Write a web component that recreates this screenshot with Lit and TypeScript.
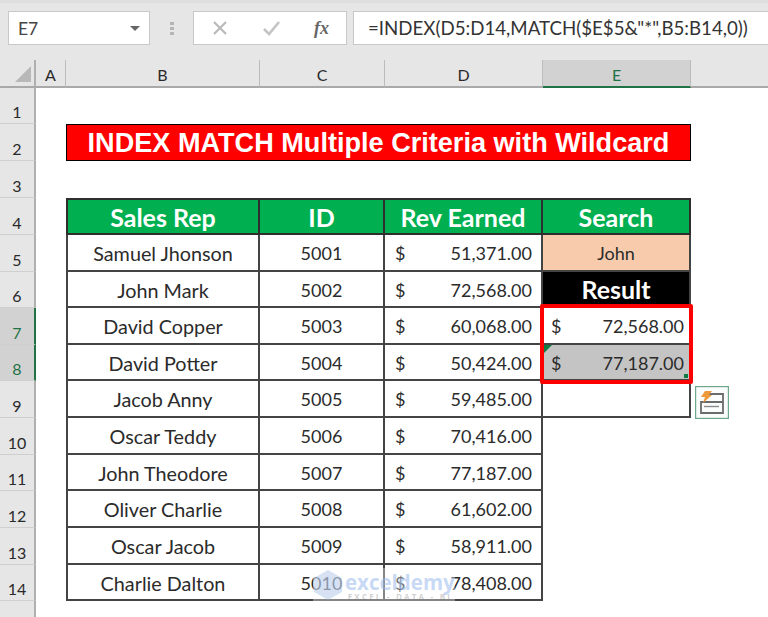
import { LitElement, html, css, svg } from "lit";
import { customElement } from "lit/decorators.js";

const rows: [string, string, string][] = [
  ["Samuel Jhonson", "5001", "51,371.00"],
  ["John Mark", "5002", "72,568.00"],
  ["David Copper", "5003", "60,068.00"],
  ["David Potter", "5004", "50,424.00"],
  ["Jacob Anny", "5005", "59,485.00"],
  ["Oscar Teddy", "5006", "70,416.00"],
  ["John Theodore", "5007", "77,187.00"],
  ["Oliver Charlie", "5008", "61,602.00"],
  ["Oscar Jacob", "5009", "58,911.00"],
  ["Charlie Dalton", "5010", "78,408.00"],
];

@customElement("app-root")
export class AppRoot extends LitElement {
  static styles = css`
    :host { display: block; width: 768px; height: 617px; overflow: hidden; background: #fff; font-family: "Lato", "Liberation Sans", sans-serif; color: #262626; position: relative; }
    .bar { height: 60px; box-sizing: border-box; background: #e6e6e6; border-top: 3px solid #dedede; padding: 8px 0 15px 8px; display: flex; align-items: stretch; }
    .box { background: #fff; border: 1px solid #c9c9c9; box-sizing: border-box; display: flex; align-items: center; }
    .name { width: 142px; padding: 0 9px 0 9px; justify-content: space-between; font-size: 17.5px; color: #444; }
    .caret { width: 0; height: 0; border: 5px solid transparent; border-top: 5px solid #666; border-bottom: 0; }
    .dots { width: 43px; display: flex; flex-direction: column; align-items: center; justify-content: center; gap: 2px; }
    .dots i { width: 4px; height: 3px; background: #b5b5b5; display: block; }
    .btns { width: 154px; padding: 0 17px 0 18px; justify-content: space-between; }
    .fx { font-family: "Liberation Serif", serif; font-style: italic; font-weight: 700; font-size: 18px; color: #666; }
    .formula { flex: 1; margin-left: 6px; padding-left: 14px; font-size: 18.7px; color: #333; border-right: 0; white-space: nowrap; }

    .sheet { display: grid; grid-template-columns: 36px 30px 194px 125px 158px 148px 77px; grid-template-rows: 28px 36px 37px 37px 37px 37px 36px 37px 36px 37px 37px 36px 37px 37px 36px 16px; position: relative; }
    .ch, .rh { background: #e6e6e6; color: #2a2a2a; display: flex; justify-content: center; box-sizing: border-box; }
    .ch { align-items: center; padding-top: 3px; font-size: 16px; border-bottom: 2px solid #a9a9a9; border-right: 1px solid #bcbcbc; }
    .corner { border-right: 2px solid #b0b0b0; position: relative; padding: 0; }
    .corner svg { position: absolute; right: 3px; bottom: 4px; }
    .rh { align-items: flex-end; padding-bottom: 2px; border-right: 2px solid #b0b0b0; border-bottom: 1px solid #cfcfcf; font-size: 16px; }
    .rh.sel { background: #d2d2d2; color: #1f7246; border-right: 2px solid #217346; }
    .ch.sel { background: #d2d2d2; color: #1f7246; border-bottom: 2px solid #217346; }
    .ch.last { border-right: 0; }
    .rh.tail { border-bottom: 0; }
    .cell { box-sizing: border-box; min-width: 0; }
    .title { grid-column: span 4; background: #ff0000; color: #fff; font: 700 27.1px "Liberation Sans", sans-serif; display: flex; align-items: center; justify-content: center; border: 1px solid #000; white-space: nowrap; }
    .head { background: #00b050; color: #fff; font-weight: 700; font-size: 25px; display: flex; align-items: center; justify-content: center; border: 2px solid #2e2e2e; border-left-width: 0; }
    .head.first { border-left-width: 2px; }
    .td { border-right: 2px solid #444; border-bottom: 2px solid #444; font-size: 18px; padding-top: 1px; display: flex; align-items: center; justify-content: center; color: #2b2b2b; position: relative; }
    .td.first { border-left: 2px solid #444; font-size: 19.8px; }
    .money { justify-content: space-between; padding: 1px 9px 0 10px; }
    .money.e { padding: 1px 5px 0 8px; }
    .peach { background: #f8cbad; }
    .black { background: #000; color: #fff; font-weight: 700; font-size: 25px; padding-top: 0; }
    .grey { background: #c4c4c4; }
    .sel-box { position: absolute; left: -3px; top: -4px; width: 153px; height: 80px; box-sizing: border-box; border: 4px solid #ff0000; border-radius: 2px; z-index: 2; }
    .handle { position: absolute; right: 1px; bottom: 1px; width: 4px; height: 4px; background: #107c41; z-index: 3; }
    .tri { position: absolute; left: 1px; top: 0; width: 0; height: 0; border-top: 8px solid #107c41; border-right: 8px solid transparent; z-index: 1; }
    .holder { position: relative; }
    .tag { position: absolute; left: 4px; top: 5px; width: 34px; height: 33px; z-index: 1; }
    .mark { position: absolute; left: 313px; top: 508px; width: 142px; height: 34px; z-index: 3; display: flex; gap: 2px; background: rgba(255,255,255,.35); pointer-events: none; }
    .mark svg { flex: none; margin-top: 1px; }
    .mark-text { display: flex; flex-direction: column; align-items: center; padding-top: 4px; }
    .mark b { font: 700 20.5px/20px "Open Sans", sans-serif; color: rgba(150,185,235,.55); }
    .mark small { font: 700 8px/9px "Open Sans", sans-serif; letter-spacing: 2.2px; color: rgba(120,120,120,.35); white-space: nowrap; }
  `;

  private x() {
    return svg`<svg width="16" height="16" viewBox="0 0 16 16"><path d="M2 2l12 12M14 2L2 14" stroke="#b9b9b9" stroke-width="2.2" fill="none"/></svg>`;
  }
  private check() {
    return svg`<svg width="19" height="16" viewBox="0 0 19 16"><path d="M2 9l5 5L17 2" stroke="#c4c4c4" stroke-width="2.6" fill="none"/></svg>`;
  }
  private corner() {
    return svg`<svg width="16" height="16" viewBox="0 0 16 16"><path d="M16 0V16H0Z" fill="#b8b8b8"/></svg>`;
  }
  private tag() {
    return svg`<svg class="tag" viewBox="0 0 34 33"><rect x=".5" y=".5" width="33" height="32" fill="#fbfdfc" stroke="#6fa78a" stroke-width="1.4"/><path d="M14 8h14v8M6 16h22v11H6z" fill="none" stroke="#6b6b6b" stroke-width="1.8"/><path d="M9 20.5h15" stroke="#8a8a8a" stroke-width="1.4"/><path d="M10 5h7l-3 4h3l-9 8 2-6H6z" fill="#ee9a3a"/></svg>`;
  }

  render() {
    const ch = ["A", "B", "C", "D", "E"];
    return html`
      <div class="bar">
        <div class="box name"><span>E7</span><span class="caret"></span></div>
        <div class="dots"><i></i><i></i><i></i></div>
        <div class="box btns">${this.x()}${this.check()}<span class="fx">fx</span></div>
        <div class="box formula">=INDEX(D5:D14,MATCH($E$5&"*",B5:B14,0))</div>
      </div>
      <div class="sheet">
        <div class="ch corner">${this.corner()}</div>
        ${ch.map((c) => html`<div class="ch ${c === "E" ? "sel" : ""}">${c}</div>`)}
        <div class="ch last"></div>

        <div class="rh">1</div><div></div><div></div><div></div><div></div><div></div><div></div>
        <div class="rh">2</div><div></div><div class="cell title">INDEX MATCH Multiple Criteria with Wildcard</div><div></div>
        <div class="rh">3</div><div></div><div></div><div></div><div></div><div></div><div></div>
        <div class="rh">4</div><div></div>
        <div class="cell head first">Sales Rep</div><div class="cell head">ID</div><div class="cell head">Rev Earned</div><div class="cell head">Search</div><div></div>

        ${rows.map((r, i) => html`
          <div class="rh ${i === 2 || i === 3 ? "sel" : ""}">${i + 5}</div><div></div>
          <div class="cell td first">${r[0]}</div>
          <div class="cell td">${r[1]}</div>
          <div class="cell td money"><span>$</span><span>${r[2]}</span></div>
          ${this.eCell(i)}
          <div class="holder">${i === 4 ? this.tag() : ""}</div>
        `)}
        <div class="rh tail"></div>

        <div class="mark">
          <svg width="30" height="32" viewBox="0 0 30 32"><path d="M15 1l14 8v14l-14 8-14-8V9z" fill="rgba(165,190,230,.45)"/></svg>
          <div class="mark-text"><b>exceldemy</b><small>EXCEL - DATA - BI</small></div>
        </div>
      </div>
    `;
  }

  private eCell(i: number) {
    switch (i) {
      case 0: return html`<div class="cell td peach">John</div>`;
      case 1: return html`<div class="cell td black">Result</div>`;
      case 2: return html`<div class="cell td money e"><span>$</span><span>72,568.00</span><div class="sel-box"></div></div>`;
      case 3: return html`<div class="cell td money e grey"><div class="tri"></div><span>$</span><span>77,187.00</span><div class="handle"></div></div>`;
      case 4: return html`<div class="cell td"></div>`;
      default: return html`<div></div>`;
    }
  }
}
